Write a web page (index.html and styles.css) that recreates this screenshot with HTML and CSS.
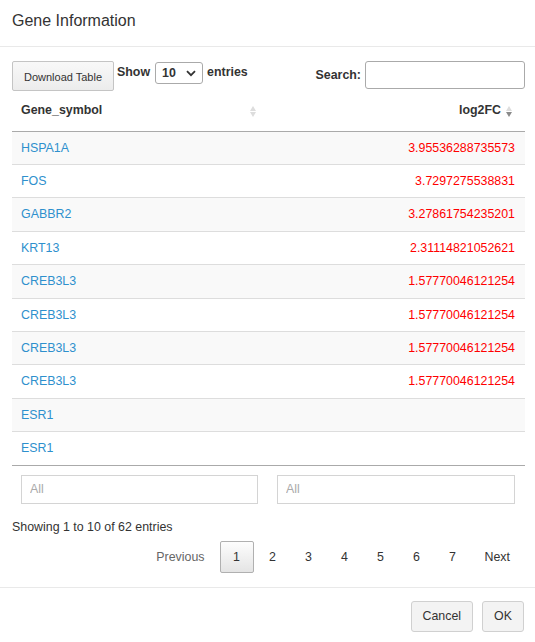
FILE: index.html
```
<!DOCTYPE html>
<html>
<head>
<meta charset="utf-8">
<link rel="stylesheet" href="styles.css">
</head>
<body>
<div class="modal">
  <div class="modal-header"><h4 class="title">Gene Information</h4></div>
  <div class="modal-body">
    <div class="toolbar">
      <button class="btn dl">Download Table</button>
      <label class="len">Show
        <span class="select-wrap">
          <select class="sel"><option>10</option></select>
          <svg class="chev" width="10" height="7" viewBox="0 0 10 7"><path d="M1 1.2 L5 5.2 L9 1.2" fill="none" stroke="#333" stroke-width="1.8"/></svg>
        </span>
        entries</label>
      <label class="search">Search: <input class="search-in" type="text"></label>
    </div>
    <table class="dt">
      <thead>
        <tr>
          <th class="c1">Gene_symbol<span class="sort"><i class="up"></i><i class="dn"></i></span></th>
          <th class="c2">log2FC<span class="sort active"><i class="up"></i><i class="dn"></i></span></th>
        </tr>
      </thead>
      <tbody>
        <tr><td><a>HSPA1A</a></td><td class="num">3.95536288735573</td></tr>
        <tr><td><a>FOS</a></td><td class="num">3.7297275538831</td></tr>
        <tr><td><a>GABBR2</a></td><td class="num">3.27861754235201</td></tr>
        <tr><td><a>KRT13</a></td><td class="num">2.31114821052621</td></tr>
        <tr><td><a>CREB3L3</a></td><td class="num">1.57770046121254</td></tr>
        <tr><td><a>CREB3L3</a></td><td class="num">1.57770046121254</td></tr>
        <tr><td><a>CREB3L3</a></td><td class="num">1.57770046121254</td></tr>
        <tr><td><a>CREB3L3</a></td><td class="num">1.57770046121254</td></tr>
        <tr><td><a>ESR1</a></td><td class="num"></td></tr>
        <tr><td><a>ESR1</a></td><td class="num"></td></tr>
      </tbody>
      <tfoot>
        <tr>
          <td><input class="filter" placeholder="All"></td>
          <td><input class="filter" placeholder="All"></td>
        </tr>
      </tfoot>
    </table>
    <div class="info">Showing 1 to 10 of 62 entries</div>
    <div class="paging">
      <span class="pb prev">Previous</span>
      <span class="pb num-b current">1</span>
      <span class="pb num-b">2</span>
      <span class="pb num-b">3</span>
      <span class="pb num-b">4</span>
      <span class="pb num-b">5</span>
      <span class="pb num-b">6</span>
      <span class="pb num-b">7</span>
      <span class="pb next">Next</span>
    </div>
  </div>
  <div class="modal-footer">
    <button class="btn fbtn">Cancel</button>
    <button class="btn fbtn">OK</button>
  </div>
</div>
</body>
</html>
```
FILE: styles.css
```
* { box-sizing: border-box; }
html, body { margin: 0; padding: 0; background: #fff; }
body { font-family: "Liberation Sans", Arial, sans-serif; color: #333; font-size: 12.4px; }
.modal { width: 535px; height: 642px; }
.modal-header { height: 47px; padding: 12px 12px 0; border-bottom: 1px solid #e9e9e9; }
.title { margin: 0; font-size: 16px; font-weight: normal; line-height: 18px; color: #333; }
.modal-body { padding: 14px 10px 14px 12px; }
.toolbar { display: flex; align-items: flex-start; height: 30px; }
.btn { font-family: "Liberation Sans", Arial, sans-serif; color: #333; background: linear-gradient(#f8f8f8, #ececec); border: 1px solid #c4c4c4; border-radius: 2px; cursor: pointer; }
.dl { width: 102px; height: 30px; font-size: 11px; padding: 2px 0 0; }
.len { display: flex; align-items: flex-start; font-weight: bold; font-size: 12.4px; margin-left: 3px; line-height: 14px; padding-top: 4px; }
.select-wrap { position: relative; display: inline-block; width: 48px; height: 22px; margin: -3px 4px 0 5px; }
.sel { appearance: none; -webkit-appearance: none; width: 48px; height: 22px; border: 1px solid #aaa; border-radius: 3px; background: #fff; font-family: "Liberation Sans", Arial, sans-serif; font-weight: bold; font-size: 12.4px; color: #333; padding: 0 0 0 6px; }
.chev { position: absolute; right: 7px; top: 8px; }
.search { margin-left: auto; display: flex; align-items: center; font-weight: bold; font-size: 12.4px; height: 28px; margin-top: 0; margin-right: 0; }
.search-in { width: 160px; height: 28px; margin-left: 4px; border: 1px solid #aaa; border-radius: 3px; }
.dt { width: 513px; border-collapse: collapse; table-layout: fixed; }
.dt th { font-weight: bold; font-size: 12.4px; line-height: 19px; padding: 10px 24px 10px 9px; border-bottom: 1px solid #aaa; position: relative; text-align: left; height: 40px; }
.dt th.c1 { width: 256px; }
.dt th.c2 { text-align: right; }
.sort { position: absolute; top: 15px; width: 7px; height: 11px; display: flex; flex-direction: column; justify-content: space-between; }
.c1 .sort { right: 11px; }
.c2 .sort { right: 12px; }
.sort i { display: block; width: 0; height: 0; border-left: 3.5px solid transparent; border-right: 3.5px solid transparent; }
.sort .up { border-bottom: 5px solid #ddd; }
.sort .dn { border-top: 5px solid #ddd; }
.sort.active .dn { border-top-color: #8a8a8a; }
.dt tbody td { padding: 8px 10px 8px 9px; line-height: 16.4px; font-size: 12.4px; border-bottom: 1px solid #ddd; height: 33.4px; }
.dt tbody tr:nth-child(odd) td { background: #f9f9f9; }
.dt tbody tr:last-child td { border-bottom-color: #aaa; }
.dt a { color: #2e90cd; text-decoration: none; }
.dt .num { text-align: right; color: #ff0000; }
.dt tfoot td { padding: 9px 10px 9px 9px; }
.filter { width: 100%; height: 29px; border: 1px solid #d4d4d4; border-radius: 0; padding: 0 8px; font-family: "Liberation Sans", Arial, sans-serif; font-size: 12.4px; color: #555; }
.filter::placeholder { color: #aaa; }
.info { padding-top: 7px; line-height: 14px; font-size: 12.4px; }
.paging { display: flex; justify-content: flex-end; margin-top: 7px; height: 32px; padding-right: 2px; }
.pb { display: flex; align-items: center; justify-content: center; height: 32px; font-size: 12.4px; color: #333; margin-left: 2px; border: 1px solid transparent; border-radius: 2px; }
.prev { padding: 0 12px; color: #666; }
.next { padding: 0 12px; }
.num-b { width: 34px; }
.current { border-color: #b0b0b0; background: linear-gradient(#fdfdfd, #e4e4e4); }
.modal-footer { border-top: 1px solid #e9e9e9; display: flex; justify-content: flex-end; gap: 9px; padding: 13px 11px 0 0; }
.fbtn { height: 31px; padding: 0 11px; font-size: 12.4px; border-color: #d0d0d0; background: #f3f3f3; border-radius: 3px; }
```
